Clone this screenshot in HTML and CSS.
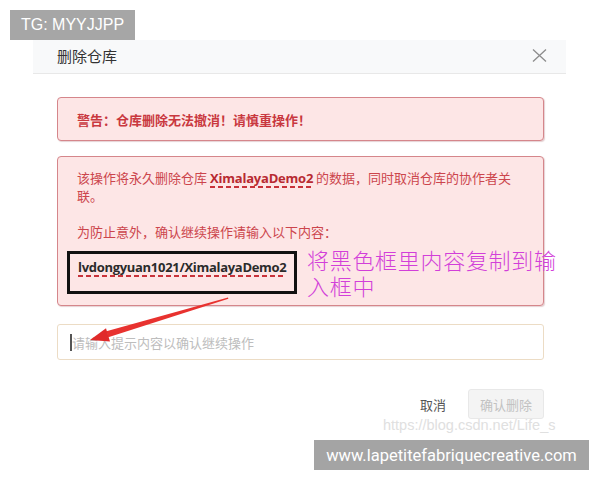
FILE: index.html
```html
<!DOCTYPE html>
<html lang="zh-CN">
<head>
<meta charset="utf-8">
<title>删除仓库</title>
<link rel="stylesheet" href="styles.css">
</head>
<body>
<div class="page">
  <div class="dialog">
    <div class="dlg-header">
      <span class="dlg-title">删除仓库</span>
      <svg class="close" viewBox="0 0 15 13" width="15" height="13"><path d="M1 0.5L14 12.5M14 0.5L1 12.5" stroke="#8c8c8c" stroke-width="1.3" fill="none"/></svg>
    </div>
    <div class="dlg-body">
      <div class="alert alert-title">警告：仓库删除无法撤消！请慎重操作！</div>
      <div class="alert alert-detail">
        <p class="para">该操作将永久删除仓库 <b class="dash repo">XimalayaDemo2</b> 的数据，同时取消仓库的协作者关联。</p>
        <p class="para para-last">为防止意外，确认继续操作请输入以下内容：</p>
        <div class="confirm-box"><b class="dash path">lvdongyuan1021/XimalayaDemo2</b></div>
      </div>
      <div class="input"><span class="caret"></span><span class="placeholder">请输入提示内容以确认继续操作</span></div>
      <div class="actions"><span class="cancel">取消</span><span class="btn-disabled">确认删除</span></div>
    </div>
  </div>
  <div class="note">将黑色框里内容复制到输入框中</div>
  <svg class="arrow" viewBox="0 0 600 480" width="600" height="480">
    <polygon points="228,297.4 228.4,298.8 108.3,337.2 106.4,331.2" fill="#e8322f"/>
    <polygon points="90,340 110,341.4 106,328.2" fill="#e02a2a"/>
  </svg>
  <div class="csdn">https://blog.csdn.net/Life_s</div>
  <div class="wm-tg">TG: MYYJJPP</div>
  <div class="wm-site">www.lapetitefabriquecreative.com</div>
</div>
</body>
</html>
```
FILE: styles.css
```css
* { box-sizing: border-box; }
html, body { margin: 0; padding: 0; background: #fff; }
body { font-family: "Noto Sans CJK SC", "Open Sans", sans-serif; }

.page {
  position: relative;
  width: 600px;
  height: 480px;
  overflow: hidden;
  padding-top: 40px;
  padding-left: 33px;
}

.dialog { width: 533px; }

.dlg-header {
  height: 34px;
  background: #f8f9fa;
  border-bottom: 1px solid #e8e8e8;
  display: flex;
  align-items: center;
  justify-content: space-between;
  padding: 0 19px 2px 24px;
}
.dlg-title { font-size: 15px; color: #333; line-height: 20px; }
.close { display: block; }

.dlg-body { padding: 23px 22px 0 24px; }

.alert {
  background: #fde6e6;
  border: 1px solid #d5868b;
  border-radius: 4px;
  box-shadow: 1px 1px 1px rgba(150, 70, 80, 0.25);
  color: #c9383f;
  font-size: 13px;
}
.alert-title {
  height: 44px;
  padding: 0 19px;
  display: flex;
  align-items: center;
  font-weight: bold;
}
.alert-detail {
  margin-top: 15px;
  padding: 12px 19px 11px;
  line-height: 18px;
  color: #cc454c;
}
.para { margin: 0 0 18px; }
.para-last { margin-bottom: 10px; }

.dash {
  font-family: "Open Sans", "Liberation Sans", sans-serif;
  font-weight: bold;
  font-size: 13px;
  padding-bottom: 1px;
  background-image: linear-gradient(to right, #c8323a 0 5px, transparent 5px 8px);
  background-size: 8px 2px;
  background-repeat: repeat-x;
  background-position: 0 100%;
}
.repo { color: #b82a31; letter-spacing: -0.2px; }
.path { color: #2b2b2b; letter-spacing: -0.3px; }

.confirm-box {
  margin-left: -10px;
  width: 230px;
  height: 43px;
  border: 3px solid #111;
  padding: 4px 0 0 8px;
  line-height: 18px;
}

.note {
  position: absolute;
  left: 307px;
  top: 246px;
  width: 254px;
  font-size: 22px;
  line-height: 26px;
  letter-spacing: 0.7px;
  font-weight: 300;
  color: #d23fd9;
}

.input {
  margin-top: 18px;
  height: 36px;
  border: 1px solid #ecdcc5;
  border-radius: 3px;
  display: flex;
  align-items: center;
  padding-left: 12px;
}
.caret { width: 2px; height: 17px; background: #555; }
.placeholder { font-size: 13px; color: #bdbdbd; }

.actions {
  margin-top: 29px;
  display: flex;
  justify-content: flex-end;
  align-items: center;
  gap: 22px;
}
.cancel { font-size: 13px; color: #555; }
.btn-disabled {
  width: 76px;
  height: 30px;
  display: flex;
  align-items: center;
  justify-content: center;
  background: #f4f4f4;
  border: 1px solid #e8e8e8;
  border-radius: 3px;
  font-size: 13px;
  color: #c2c2c2;
}

.arrow { position: absolute; left: 0; top: 0; pointer-events: none; }

.csdn {
  position: absolute;
  left: 383px;
  top: 415px;
  font-family: "Liberation Sans", sans-serif;
  font-size: 14.5px;
  line-height: 20px;
  color: #e0e0e0;
}

.wm-tg {
  position: absolute;
  left: 10px;
  top: 10px;
  width: 125px;
  height: 30px;
  background: #a6a6a6;
  color: #fff;
  font-family: "Liberation Sans", sans-serif;
  font-size: 16px;
  display: flex;
  align-items: center;
  justify-content: center;
}
.wm-site {
  position: absolute;
  left: 314px;
  top: 440px;
  width: 275px;
  height: 30px;
  background: #a4a4a4;
  color: #fff;
  font-family: Roboto, "Liberation Sans", sans-serif;
  font-size: 16.5px;
  display: flex;
  align-items: center;
  justify-content: center;
}
```
